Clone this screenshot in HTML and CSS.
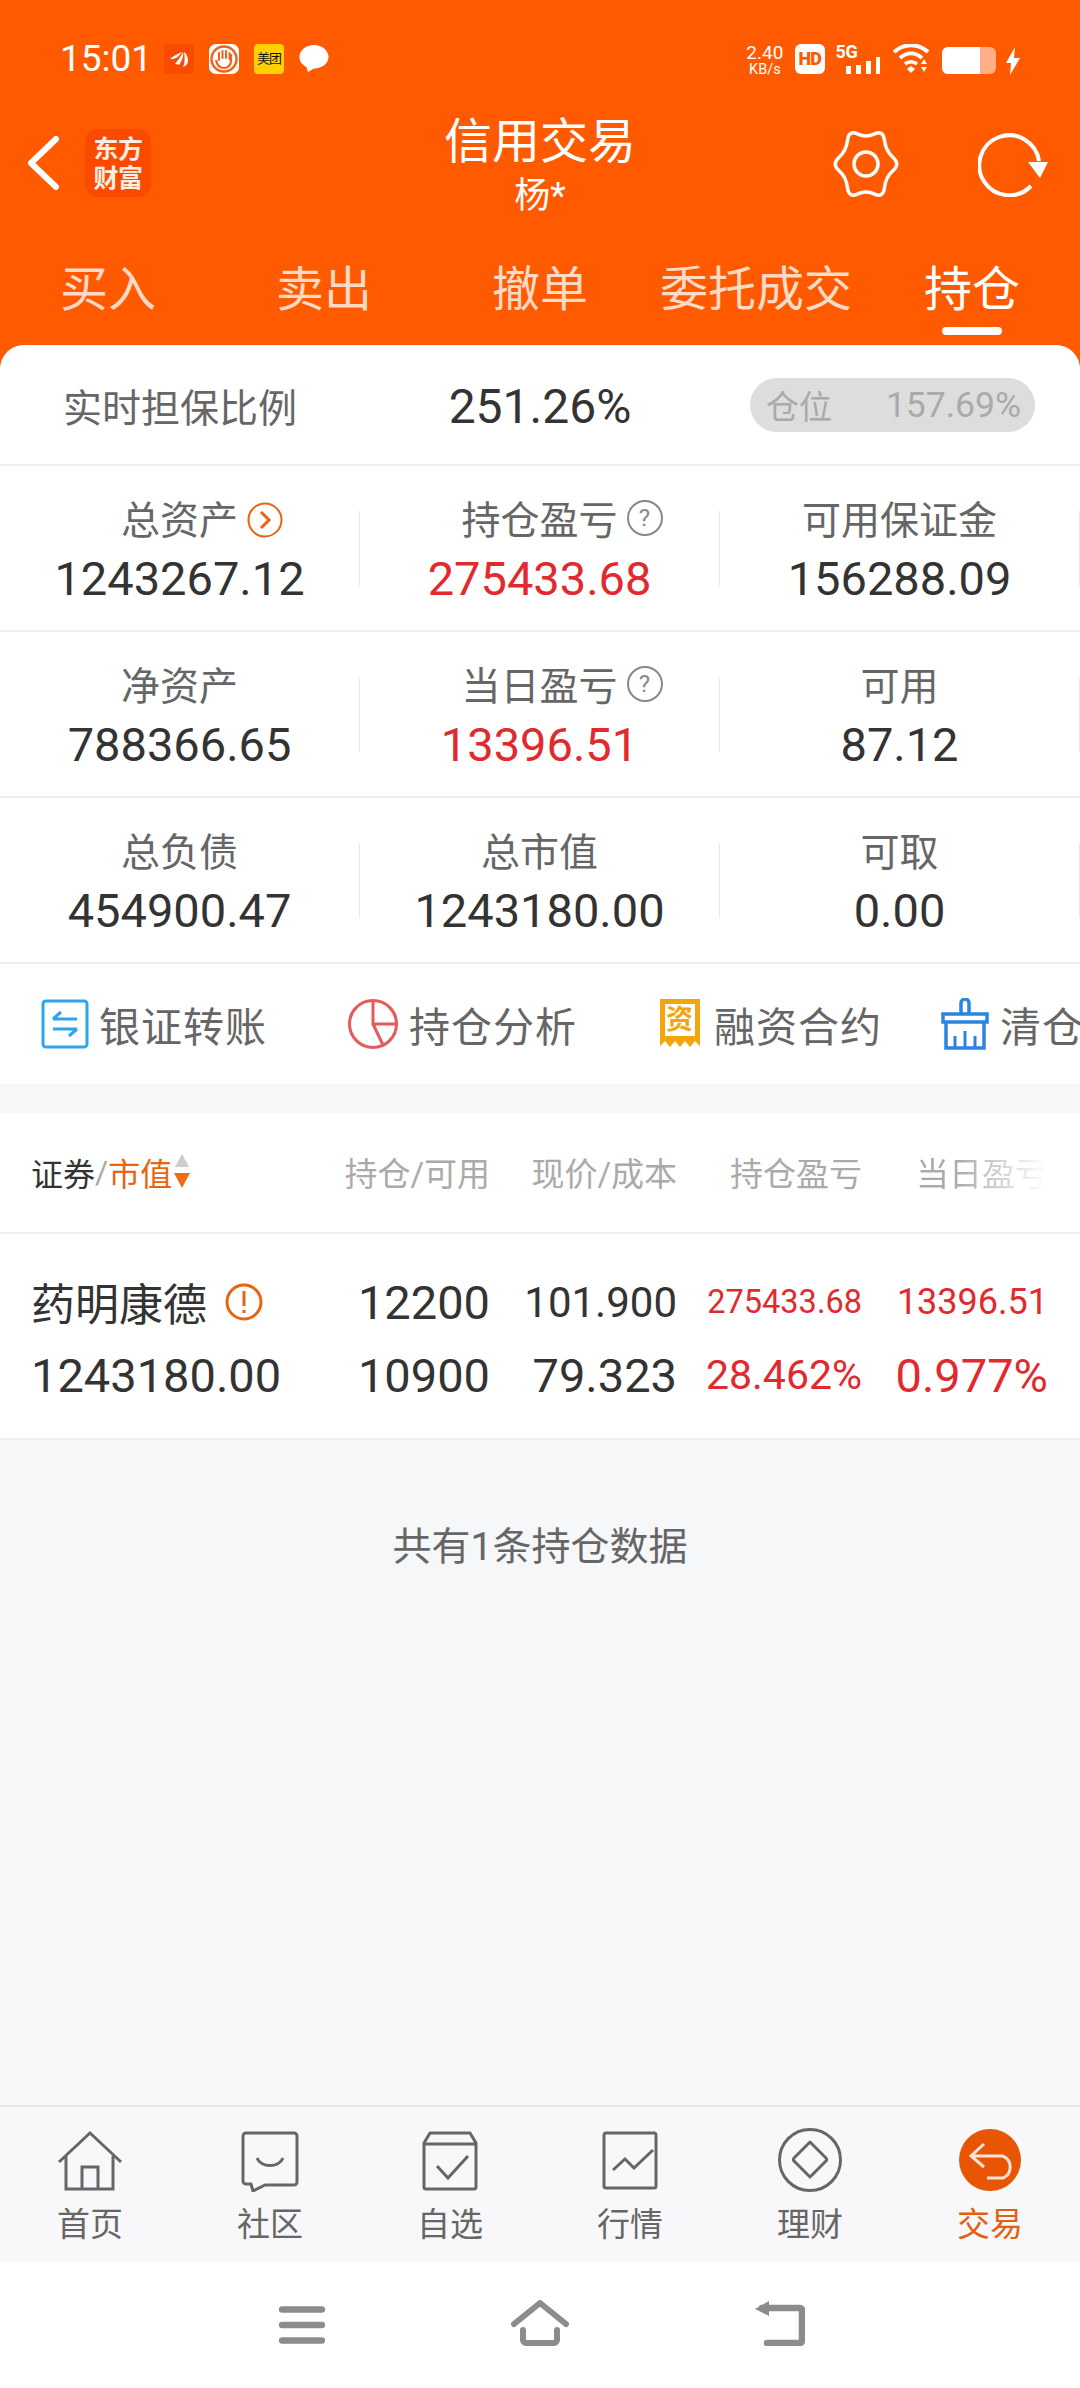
FILE: index.html
```html
<!DOCTYPE html>
<html lang="zh-CN">
<head>
<meta charset="utf-8">
<title>信用交易</title>
<link rel="stylesheet" href="styles.css">
</head>
<body>
<div class="app">
  <header class="top">
    <div class="status">
      <span class="time">15:01</span>
      <div class="notifs">
        <span class="nbox nbox-red"><svg viewBox="0 0 30 30" width="30" height="30"><path d="M6 15c5-4 9-6 12-7-2 3-4 5-6 6-2 1-4 1-6 1z" fill="#fff"/><path d="M11 20c2-3 6-7 8-12 1 3-1 9-4 13-1-1-3-1-4-1z" fill="#fff"/><path d="M19 23c2-4 2-10 1-15 3 2 4 6 4 9 0 3-2 5-5 6z" fill="#fff"/></svg></span>
        <span class="nbox nbox-white"><svg viewBox="0 0 30 30" width="30" height="30"><circle cx="15" cy="15" r="12.500" fill="none" stroke="#F2601A" stroke-width="2.400"/><path d="M7 16c1 5 4 8 8 8s7-3 7-7V10" fill="none" stroke="#F2601A" stroke-width="2.200"/><path d="M10 16V9M13.500 14V7M17 14V7M20.500 15V9" stroke="#F2601A" stroke-width="2" stroke-linecap="round"/></svg></span>
        <span class="nbox nbox-yellow">美团</span>
        <span class="nbubble"><svg viewBox="0 0 30 30" width="30" height="30"><path d="M15 1C7 1 .5 6 .5 13c0 5 3 8 7 10l1.500 5 6-3.500c8 0 14.500-5 14.500-11.500S23 1 15 1z" fill="#fff"/></svg></span>
      </div>
      <div class="sys">
        <span class="speed"><b>2.40</b><i>KB/s</i></span>
        <span class="hd">HD</span>
        <span class="signal"><em>5G</em><svg viewBox="0 0 35 18" width="35" height="18"><path d="M0 9h5v8H0zM10 8h5v9h-5zM20 4h5v13h-5zM30 0h4v17h-4z" fill="#fff"/></svg></span>
        <svg class="wifi" viewBox="0 0 37 30" width="37" height="30"><path d="M1 8c10-9 24-9 34 0" fill="none" stroke="#fff" stroke-width="4"/><path d="M7 14c7-6 15-6 22 0" fill="none" stroke="#fff" stroke-width="4"/><path d="M12 20c4-3 8-3 12 0" fill="none" stroke="#fff" stroke-width="3.500"/><path d="M14 25l4-3 4 3-4 4z" fill="#fff"/><path d="M31 15l3 5h-6zM31 28l-3-5h6z" fill="#fff"/></svg>
        <span class="battery"><span class="battery-fill"></span></span>
        <svg class="bolt" viewBox="0 0 14 28" width="14" height="28"><path d="M9 0L0 16h5L4 28l10-17H8z" fill="#fff"/></svg>
      </div>
    </div>
    <div class="titlebar">
      <div class="tb-left">
        <svg class="back" viewBox="0 0 32 54" width="32" height="54"><path d="M29 3L4 27l25 24" fill="none" stroke="#fff" stroke-width="6" stroke-linecap="round" stroke-linejoin="round"/></svg>
        <svg class="logo" viewBox="0 0 66 68" width="66" height="68"><rect width="66" height="68" rx="13" fill="#F94A00"/><text x="33" y="29" text-anchor="middle" class="logo-text">东方</text><text x="33" y="58" text-anchor="middle" class="logo-text">财富</text></svg>
      </div>
      <div class="tb-title">
        <div class="tb-main">信用交易</div>
        <div class="tb-sub">杨*</div>
      </div>
      <div class="tb-right">
        <svg viewBox="0 0 66 66" width="66" height="66"><g transform="translate(.990 -3.630) scale(.97 1.110)"><path vector-effect="non-scaling-stroke" d="M60.930 27.130Q68.500 33 60.930 38.880Q53.350 44.750 52.050 54.250Q50.750 63.740 41.880 60.120Q33 56.500 24.130 60.120Q15.250 63.740 13.950 54.250Q12.650 44.750 5.080 38.880Q-2.500 33 5.080 27.130Q12.650 21.250 13.950 11.750Q15.250 2.260 24.130 5.880Q33 9.500 41.880 5.880Q50.750 2.260 52.050 11.750Q53.350 21.250 60.930 27.130Z" fill="none" stroke="#fff" stroke-width="3.500" stroke-linejoin="round"/></g><circle cx="33" cy="33" r="12" fill="none" stroke="#fff" stroke-width="3.500"/></svg>
        <svg class="refresh" viewBox="0 0 72 66" width="72" height="66"><path d="M53 55A30 30 0 1 1 61 30" fill="none" stroke="#fff" stroke-width="4"/><path d="M50 31h20l-8 16z" fill="#fff"/></svg>
      </div>
    </div>
    <nav class="tabs">
      <span class="tab">买入</span>
      <span class="tab">卖出</span>
      <span class="tab">撤单</span>
      <span class="tab">委托成交</span>
      <span class="tab tab-on">持仓</span>
    </nav>
  </header>

  <main class="body">
    <section class="card">
      <div class="ratio">
        <span class="ratio-label">实时担保比例</span>
        <span class="ratio-val">251.26%</span>
        <span class="pill"><span>仓位</span><span class="pill-num">157.69%</span></span>
      </div>
      <div class="stats">
        <div class="stat"><div class="stat-label">总资产<svg class="badge" viewBox="0 0 36 36" width="36" height="36"><circle cx="18" cy="18" r="16.500" fill="none" stroke="#E8640F" stroke-width="2"/><path d="M14 10l8 8-8 8" fill="none" stroke="#E8640F" stroke-width="3"/></svg></div><div class="stat-val">1243267.12</div></div>
        <div class="stat"><div class="stat-label">持仓盈亏<span class="qmark badge">?</span></div><div class="stat-val red">275433.68</div></div>
        <div class="stat"><div class="stat-label">可用保证金</div><div class="stat-val">156288.09</div></div>
      </div>
      <div class="stats">
        <div class="stat"><div class="stat-label">净资产</div><div class="stat-val">788366.65</div></div>
        <div class="stat"><div class="stat-label">当日盈亏<span class="qmark badge">?</span></div><div class="stat-val red">13396.51</div></div>
        <div class="stat"><div class="stat-label">可用</div><div class="stat-val">87.12</div></div>
      </div>
      <div class="stats">
        <div class="stat"><div class="stat-label">总负债</div><div class="stat-val">454900.47</div></div>
        <div class="stat"><div class="stat-label">总市值</div><div class="stat-val">1243180.00</div></div>
        <div class="stat"><div class="stat-label">可取</div><div class="stat-val">0.00</div></div>
      </div>
      <div class="actions">
        <div class="action a1"><svg viewBox="0 0 48 50" width="48" height="50"><rect x="2" y="2" width="44" height="46" rx="3" fill="none" stroke="#2FA4EE" stroke-width="3"/><path d="M12 20h24M20 13l-8 7M36 30H12M36 30l-8 7" fill="none" stroke="#2FA4EE" stroke-width="3"/></svg><span>银证转账</span></div>
        <div class="action a2"><svg viewBox="0 0 52 52" width="52" height="52"><circle cx="26" cy="26" r="23.500" fill="none" stroke="#E55A5A" stroke-width="3"/><path d="M26 3v23h23M26 26l10 21" fill="none" stroke="#E55A5A" stroke-width="3"/></svg><span>持仓分析</span></div>
        <div class="action a3"><svg viewBox="0 0 42 52" width="42" height="52"><path d="M1 1h40v47l-5-5-5 6-5-6-5 6-5-6-5 6-5-6-5 5z" fill="#F2A50C"/><rect x="6" y="6" width="30" height="32" fill="#fff"/><text x="21" y="31" text-anchor="middle" class="a3-glyph">资</text></svg><span>融资合约</span></div>
        <div class="action a4"><svg viewBox="0 0 50 52" width="50" height="52"><path d="M21 16V5a4 4 0 0 1 8 0v11" fill="none" stroke="#2B84E0" stroke-width="3.500"/><path d="M3 16h44v8H3z" fill="none" stroke="#2B84E0" stroke-width="3.500"/><path d="M6 24v26h38V24" fill="none" stroke="#2B84E0" stroke-width="3.500"/><path d="M15 50V38M25 50V33M35 50V38" stroke="#2B84E0" stroke-width="3"/></svg><span>清仓</span></div>
      </div>
    </section>

    <div class="gap"></div>

    <section class="table">
      <div class="thead grid5">
        <div class="th-first"><span class="th-dark">证券</span><span class="th-slash">/</span><span class="th-or">市值</span><svg class="sort" viewBox="0 0 18 34" width="18" height="34"><path d="M9 0l7 13H2z" fill="#ccc"/><path d="M1 19h16l-8 15z" fill="#F26A14"/></svg></div>
        <div>持仓/可用</div>
        <div>现价/成本</div>
        <div>持仓盈亏</div>
        <div class="th-fade">当日盈亏</div>
      </div>
      <div class="trow">
        <div class="grid5 row-a">
          <div class="name">药明康德<svg class="warn" viewBox="0 0 38 38" width="38" height="38"><circle cx="19" cy="19" r="17" fill="none" stroke="#E8640F" stroke-width="3"/><path d="M19 8v15M19 27v3" stroke="#E8640F" stroke-width="3"/></svg></div>
          <div class="num">12200</div>
          <div class="num sm0">101.900</div>
          <div class="num red sm1">275433.68</div>
          <div class="num red sm2">13396.51</div>
        </div>
        <div class="grid5 row-b">
          <div class="num left">1243180.00</div>
          <div class="num">10900</div>
          <div class="num">79.323</div>
          <div class="num red sm3">28.462%</div>
          <div class="num red">0.977%</div>
        </div>
      </div>
    </section>

    <div class="empty">共有1条持仓数据</div>
  </main>

  <footer class="tabbar">
    <div class="tb-item"><svg viewBox="0 0 66 62" width="66" height="62"><path d="M2 32L33 3l31 29M9 26v33h47V26M25 59V37h16v22" fill="none" stroke="#666" stroke-width="3"/></svg><span>首页</span></div>
    <div class="tb-item"><svg viewBox="0 0 66 62" width="66" height="62"><path d="M9 3h48a3 3 0 0 1 3 3v46a3 3 0 0 1-3 3H28L16 61l-2-7H9a3 3 0 0 1-3-3V6a3 3 0 0 1 3-3z" fill="none" stroke="#666" stroke-width="3" stroke-linejoin="round"/><path d="M20 28c4 10 22 10 26 0" fill="none" stroke="#666" stroke-width="3"/></svg><span>社区</span></div>
    <div class="tb-item"><svg viewBox="0 0 66 62" width="66" height="62"><path d="M7 13L13 3h40l6 10v44a2 2 0 0 1-2 2H9a2 2 0 0 1-2-2zM7 14h52" fill="none" stroke="#666" stroke-width="3" stroke-linejoin="round"/><path d="M20 36l11 12 20-22" fill="none" stroke="#666" stroke-width="3"/></svg><span>自选</span></div>
    <div class="tb-item"><svg viewBox="0 0 66 62" width="66" height="62"><rect x="7" y="3" width="52" height="55" rx="2" fill="none" stroke="#666" stroke-width="3"/><path d="M18 40l12-11 9 9 19-18" transform="translate(-2 0)" fill="none" stroke="#666" stroke-width="3"/></svg><span>行情</span></div>
    <div class="tb-item"><svg viewBox="0 0 66 66" width="66" height="66" class="tb-tall"><circle cx="33" cy="33" r="30.500" fill="none" stroke="#666" stroke-width="3"/><path d="M33 15l16 16a2 2 0 0 1 0 3L33 50 17 34a2 2 0 0 1 0-3z" fill="none" stroke="#666" stroke-width="3" stroke-linejoin="round"/></svg><span>理财</span></div>
    <div class="tb-item tb-on"><svg viewBox="0 0 66 66" width="66" height="66" class="tb-tall"><circle cx="33" cy="33" r="31" fill="#E85505"/><path d="M27 17L14 29l13 11M14 29h32a12 12 0 0 1 0 22H30" fill="none" stroke="#FCE3D5" stroke-width="3"/></svg><span>交易</span></div>
  </footer>

  <div class="sysnav">
    <svg class="nav-menu" viewBox="0 0 46 38" width="46" height="38"><path d="M3 3.500h40M3 19h40M3 34.500h40" stroke="#8C8C8C" stroke-width="6.500" stroke-linecap="round"/></svg>
    <svg viewBox="0 0 58 46" width="58" height="46"><path d="M3 24L29 3l26 21M12 30v10a3 3 0 0 0 3 3h28a3 3 0 0 0 3-3V30" fill="none" stroke="#8C8C8C" stroke-width="6" stroke-linecap="round" stroke-linejoin="round"/></svg>
    <svg viewBox="0 0 50 46" width="50" height="46"><path d="M12 43h33a2 2 0 0 0 2-2V10a2 2 0 0 0-2-2H7" fill="none" stroke="#8C8C8C" stroke-width="6.500" stroke-linecap="round"/><path d="M0 9l14-8v15z" fill="#8C8C8C"/></svg>
  </div>
</div>
</body>
</html>
```
FILE: styles.css
```css
* { box-sizing: border-box; }
html, body { margin: 0; padding: 0; }
body { font-family: Roboto, "Noto Sans CJK SC", sans-serif; background: #fff; }
.app { width: 1080px; height: 2388px; display: flex; flex-direction: column; overflow: hidden; background: #F6F7F9; }
svg { display: block; flex: none; }

.top { height: 366px; flex: none; background: #FF5A00; color: #fff; }
.status { height: 118px; padding: 44px 60px 0; display: flex; align-items: flex-start; }
.time { font-size: 37px; line-height: 30px; width: 104px; }
.notifs { display: flex; gap: 15px; }
.nbox { width: 30px; height: 30px; border-radius: 4px; display: block; overflow: hidden; }
.nbox-red { background: #F94A00; }
.nbox-white { background: #fff; border-radius: 7px; }
.nbox-yellow { background: #FFD100; color: #111; font-size: 13px; line-height: 30px; text-align: center; white-space: nowrap; letter-spacing: -1px; }
.sys { margin-left: auto; display: flex; align-items: flex-start; width: 275px; }
.speed { width: 40px; margin-right: 10px; display: flex; flex-direction: column; align-items: center; line-height: 1; }
.speed b { font-weight: 400; font-size: 19px; line-height: 18px; }
.speed i { font-style: normal; font-size: 14.500px; line-height: 15px; white-space: nowrap; }
.hd { width: 30px; height: 30px; border-radius: 6px; background: #fff; color: #FF5A00; font-size: 18px; font-weight: 900; line-height: 30px; text-align: center; letter-spacing: -1px; }
.signal { width: 45px; height: 30px; margin-left: 11px; position: relative; }
.signal em { font-style: normal; font-weight: 700; font-size: 18px; line-height: 16px; display: block; letter-spacing: -.5px; }
.signal svg { position: absolute; left: 10px; top: 13px; }
.wifi { margin-left: 13px; }
.battery { width: 54px; height: 27px; margin-left: 12px; margin-top: 3px; border-radius: 6px; background: #FFAF85; display: block; overflow: hidden; }
.battery-fill { display: block; width: 38px; height: 27px; background: #fff; }
.bolt { margin-left: 10px; margin-top: 3px; }

.titlebar { height: 126px; display: grid; grid-template-columns: 1fr auto 1fr; align-items: start; }
.tb-left { display: flex; align-items: center; padding-left: 27px; padding-top: 11px; gap: 26px; }
.logo-text { font-size: 25px; font-weight: 700; fill: #FFEDE3; letter-spacing: -.5px; font-family: "Noto Sans CJK SC", sans-serif; }
.tb-title { text-align: center; }
.tb-main { font-size: 48px; line-height: 60px; margin-top: -6px; }
.tb-sub { font-size: 36px; line-height: 44px; margin-top: 2px; }
.tb-right { display: flex; justify-content: flex-end; padding-right: 30px; gap: 79px; padding-top: 13px; }
.tabs { display: grid; grid-template-columns: repeat(5, 216px); height: 122px; }
.tab { text-align: center; font-size: 48px; line-height: 70px; padding-top: 11px; color: rgba(255,255,255,.78); position: relative; white-space: nowrap; }
.tab-on { color: #fff; }
.tab-on::after { content: ""; position: absolute; left: 78px; top: 83px; width: 60px; height: 8px; border-radius: 4px; background: #fff; }

.body { flex: 1; margin-top: -21px; display: flex; flex-direction: column; min-height: 0; }
.card { background: #fff; border-radius: 24px 24px 0 0; }
.ratio { height: 121px; display: grid; grid-template-columns: 360px 360px 360px; align-items: center; border-bottom: 2px solid #EFEFEF; }
.ratio-label { text-align: center; font-size: 39px; color: #666; }
.ratio-val { text-align: center; font-size: 48px; color: #333; padding-top: 3px; }
.pill { margin-left: 30px; width: 285px; height: 54px; border-radius: 27px; background: #DDD; color: #AAA; font-size: 33px; display: flex; justify-content: space-between; align-items: center; padding: 0 14px 0 16px; }
.pill-num { font-size: 35.500px; }

.stats { height: 166px; display: grid; grid-template-columns: repeat(3, 360px); align-items: center; border-bottom: 2px solid #EFEFEF; }
.stat { height: 75px; border-right: 1px solid #EAEAEA; display: flex; flex-direction: column; align-items: center; }
.stat-label { font-size: 39px; line-height: 50px; color: #666; margin-top: -15px; position: relative; white-space: nowrap; }
.badge { position: absolute; left: 100%; top: 6px; margin-left: 9px; }
.stat-val { font-size: 47px; line-height: 60px; color: #333; margin-top: 3px; white-space: nowrap; }
.red { color: #E12A2E !important; }
.qmark { width: 36px; height: 36px; border: 2px solid #888; border-radius: 50%; color: #888; font-size: 24px; line-height: 32px; text-align: center; display: block; top: 4px; }

.actions { height: 120px; display: flex; align-items: center; overflow: hidden; white-space: nowrap; }
.action { display: flex; align-items: center; font-size: 41px; color: #666; letter-spacing: 1px; flex: none; gap: 10px; }
.a1 { margin-left: 41px; }
.a2 { margin-left: 80px; }
.a3 { margin-left: 82px; gap: 13px; }
.a4 { margin-left: 58px; }
.a3-glyph { font-size: 27px; fill: #F2A50C; font-weight: 700; font-family: "Noto Sans CJK SC", sans-serif; }

.gap { height: 29px; flex: none; }
.table { background: #fff; }
.grid5 { display: grid; grid-template-columns: 269px 190px 187px 185px 186px; padding-left: 31px; text-align: right; }
.thead { height: 121px; border-bottom: 2px solid #EFEFEF; align-items: center; font-size: 33px; color: #AAA; padding-bottom: 2px; }
.th-first { display: flex; align-items: center; text-align: left; font-size: 32px; }
.th-dark { color: #333; }
.th-slash { color: #AAA; }
.th-or { color: #E8640F; }
.sort { margin-left: 1px; margin-top: -2px; }
.th-fade { background: linear-gradient(to right, #AAA 50%, #fff 100%); -webkit-background-clip: text; background-clip: text; color: transparent; }
.trow { height: 206px; border-bottom: 2px solid #EFEFEF; padding-top: 35px; }
.row-a { height: 66px; align-items: center; margin-bottom: 7px; }
.row-b { height: 66px; align-items: center; }
.num { font-size: 47px; color: #333; white-space: nowrap; }
.left { text-align: left; }
.sm0 { font-size: 42px; }
.sm1 { font-size: 32.500px; }
.sm2 { font-size: 36px; }
.sm3 { font-size: 41px; }
.name { font-size: 44px; color: #333; display: flex; align-items: center; gap: 18px; text-align: left; }

.empty { flex: 1; text-align: center; font-size: 39px; color: #666; line-height: 50px; padding-top: 82px; }
.tabbar { height: 157px; flex: none; display: grid; grid-template-columns: repeat(6, 180px); background: #F8F8FA; border-top: 2px solid #E4E4E6; }
.tb-item { display: flex; flex-direction: column; align-items: center; padding-top: 23px; font-size: 33px; color: #666; }
.tb-item span { line-height: 42px; margin-top: 12px; }
.tb-tall { margin-top: -3px; margin-bottom: -1px; }
.tb-on { color: #E26010; }
.sysnav { height: 126px; flex: none; background: #fff; display: grid; grid-template-columns: 46px 58px 50px; column-gap: 186px; justify-content: center; align-items: start; padding: 38px 0 0 3px; }
.nav-menu { margin-top: 6px; }
```
